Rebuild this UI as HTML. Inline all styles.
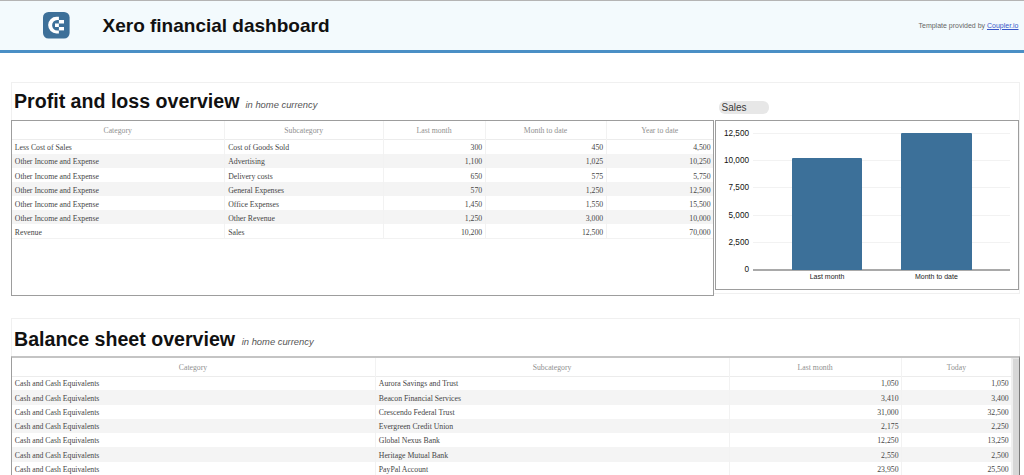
<!DOCTYPE html>
<html><head><meta charset="utf-8">
<style>
*{box-sizing:border-box;margin:0;padding:0}
html,body{width:1024px;height:475px;overflow:hidden;background:#fff;font-family:"Liberation Sans",sans-serif}
.abs{position:absolute}
#hdr{left:0;top:0;width:1024px;height:50px;background:#f3fafd;border-top:1px solid #b4b4b4}
#hbar{left:0;top:50px;width:1024px;height:3px;background:#4a8fc5}
#title{left:102.5px;top:13.8px;font-weight:bold;font-size:19px;color:#111;white-space:nowrap;line-height:24px}
#tpl{right:5.5px;top:19.5px;font-size:7px;color:#666;line-height:12px;white-space:nowrap}
#tpl a{color:#3857c9;text-decoration:underline}
.card{border:1px solid #f0f0f0;background:#fff}
.h2{font-weight:bold;font-size:19.6px;color:#111;white-space:nowrap;line-height:24px}
.sub{font-style:italic;font-size:9.4px;color:#555;white-space:nowrap;line-height:12px}
.tbl{border:1px solid #9d9d9d;background:#fff;overflow:hidden}
.serif{font-family:"Liberation Serif",serif;font-size:7.75px;white-space:nowrap;line-height:10px}
.hd{color:#909090;text-align:center}
.cell{color:#454545}
.r{text-align:right}
.stripe{background:#f4f4f4}
.vl{width:1px;background:#f2f2f2}
.hl{height:1px;background:#ececec}
.ylab{font-size:8.2px;color:#111;text-align:right;width:40px;line-height:10px}
.grid{height:1px;background:#f2f2f2;left:753px;width:257px}
.bar{background:#3c7099;border-radius:1px 1px 0 0}
.xlab{font-size:7px;color:#222;text-align:center;line-height:10px;white-space:nowrap}
</style></head>
<body>
<div id="hdr" class="abs"></div>
<div id="hbar" class="abs"></div>
<svg class="abs" style="left:0;top:0" width="100" height="50" viewBox="0 0 100 50">
  <rect x="43" y="12" width="26.6" height="26.5" rx="5.5" fill="#3d7099"></rect>
  <path d="M58.9 16.8 H56.45 A8.3 8.3 0 0 0 56.45 33.4 H58.9 V30.4 H57.3 A5.2 5.2 0 0 1 57.3 20 H58.9 Z" fill="#fff"></path>
  <rect x="58.9" y="20" width="5.1" height="3.5" fill="#fff"></rect>
  <rect x="58.9" y="27" width="5.1" height="3.4" fill="#fff"></rect>
  <rect x="55" y="23.5" width="3.9" height="3.5" fill="#fff"></rect>
</svg>
<div id="title" class="abs">Xero financial dashboard</div>
<div id="tpl" class="abs">Template provided by <a>Coupler.io</a></div>

<!-- Card 1 -->
<div class="abs card" style="left:11px;top:82px;width:1009px;height:212px"></div>
<div class="abs h2" style="left:14px;top:88.5px">Profit and loss overview</div>
<div class="abs sub" style="left:245.5px;top:98.5px">in home currency</div>

<div class="abs tbl" style="left:11px;top:120px;width:703px;height:175.5px"></div>
<div id="pl"><div class="abs stripe" style="left:12px;top:153.58px;width:701px;height:14.18px"></div><div class="abs stripe" style="left:12px;top:181.94px;width:701px;height:14.18px"></div><div class="abs stripe" style="left:12px;top:210.3px;width:701px;height:14.18px"></div><div class="abs hl" style="left:12px;top:138.9px;width:701px"></div><div class="abs hl" style="left:12px;top:238.2px;width:701px;background:#f2f2f2"></div><div class="abs vl" style="left:224.4px;top:121px;height:117.66px"></div><div class="abs vl" style="left:383px;top:121px;height:117.66px"></div><div class="abs vl" style="left:485px;top:121px;height:117.66px"></div><div class="abs vl" style="left:606px;top:121px;height:117.66px"></div><div class="abs serif hd" style="left:11px;width:213.4px;top:125.6px">Category</div><div class="abs serif hd" style="left:224.4px;width:158.6px;top:125.6px">Subcategory</div><div class="abs serif hd" style="left:383px;width:102px;top:125.6px">Last month</div><div class="abs serif hd" style="left:485px;width:121px;top:125.6px">Month to date</div><div class="abs serif hd" style="left:606px;width:107.39999999999998px;top:125.6px">Year to date</div><div class="abs serif cell" style="left:14.8px;top:143.3px">Less Cost of Sales</div><div class="abs serif cell" style="left:228.20000000000002px;top:143.3px">Cost of Goods Sold</div><div class="abs serif cell r" style="left:383px;width:99.2px;top:143.3px">300</div><div class="abs serif cell r" style="left:485px;width:118.2px;top:143.3px">450</div><div class="abs serif cell r" style="left:606px;width:104.59999999999998px;top:143.3px">4,500</div><div class="abs serif cell" style="left:14.8px;top:157.48000000000002px">Other Income and Expense</div><div class="abs serif cell" style="left:228.20000000000002px;top:157.48000000000002px">Advertising</div><div class="abs serif cell r" style="left:383px;width:99.2px;top:157.48000000000002px">1,100</div><div class="abs serif cell r" style="left:485px;width:118.2px;top:157.48000000000002px">1,025</div><div class="abs serif cell r" style="left:606px;width:104.59999999999998px;top:157.48000000000002px">10,250</div><div class="abs serif cell" style="left:14.8px;top:171.66px">Other Income and Expense</div><div class="abs serif cell" style="left:228.20000000000002px;top:171.66px">Delivery costs</div><div class="abs serif cell r" style="left:383px;width:99.2px;top:171.66px">650</div><div class="abs serif cell r" style="left:485px;width:118.2px;top:171.66px">575</div><div class="abs serif cell r" style="left:606px;width:104.59999999999998px;top:171.66px">5,750</div><div class="abs serif cell" style="left:14.8px;top:185.84px">Other Income and Expense</div><div class="abs serif cell" style="left:228.20000000000002px;top:185.84px">General Expenses</div><div class="abs serif cell r" style="left:383px;width:99.2px;top:185.84px">570</div><div class="abs serif cell r" style="left:485px;width:118.2px;top:185.84px">1,250</div><div class="abs serif cell r" style="left:606px;width:104.59999999999998px;top:185.84px">12,500</div><div class="abs serif cell" style="left:14.8px;top:200.02px">Other Income and Expense</div><div class="abs serif cell" style="left:228.20000000000002px;top:200.02px">Office Expenses</div><div class="abs serif cell r" style="left:383px;width:99.2px;top:200.02px">1,450</div><div class="abs serif cell r" style="left:485px;width:118.2px;top:200.02px">1,550</div><div class="abs serif cell r" style="left:606px;width:104.59999999999998px;top:200.02px">15,500</div><div class="abs serif cell" style="left:14.8px;top:214.20000000000002px">Other Income and Expense</div><div class="abs serif cell" style="left:228.20000000000002px;top:214.20000000000002px">Other Revenue</div><div class="abs serif cell r" style="left:383px;width:99.2px;top:214.20000000000002px">1,250</div><div class="abs serif cell r" style="left:485px;width:118.2px;top:214.20000000000002px">3,000</div><div class="abs serif cell r" style="left:606px;width:104.59999999999998px;top:214.20000000000002px">10,000</div><div class="abs serif cell" style="left:14.8px;top:228.38000000000002px">Revenue</div><div class="abs serif cell" style="left:228.20000000000002px;top:228.38000000000002px">Sales</div><div class="abs serif cell r" style="left:383px;width:99.2px;top:228.38000000000002px">10,200</div><div class="abs serif cell r" style="left:485px;width:118.2px;top:228.38000000000002px">12,500</div><div class="abs serif cell r" style="left:606px;width:104.59999999999998px;top:228.38000000000002px">70,000</div></div>

<!-- Chart -->
<div class="abs" style="left:719px;top:101px;width:49.5px;height:13px;background:#e7e7e7;border-radius:6px"></div>
<div class="abs" style="left:721.5px;top:101px;font-size:10px;color:#3a3a3a;line-height:13px">Sales</div>
<div class="abs" style="left:715px;top:120px;width:304px;height:170px;border:1px solid #9d9d9d;background:#fff"></div>
<div id="chart"><div class="abs grid" style="top:242.05999999999997px"></div><div class="abs grid" style="top:214.71999999999997px"></div><div class="abs grid" style="top:187.38px"></div><div class="abs grid" style="top:160.03999999999996px"></div><div class="abs grid" style="top:132.7px"></div><div class="abs" style="left:753px;top:269.15px;width:257px;height:1.6px;background:#a9a9a9"></div><div class="abs bar" style="left:791.8px;top:158.4px;width:70.4px;height:111.49999999999997px"></div><div class="abs bar" style="left:901px;top:133.2px;width:70.8px;height:136.7px"></div><div class="abs ylab" style="left:709px;top:265.40px;">0</div><div class="abs ylab" style="left:709px;top:238.06px;">2,500</div><div class="abs ylab" style="left:709px;top:210.72px;">5,000</div><div class="abs ylab" style="left:709px;top:183.38px;">7,500</div><div class="abs ylab" style="left:709px;top:156.04px;">10,000</div><div class="abs ylab" style="left:709px;top:128.70px;">12,500</div><div class="abs xlab" style="left:777px;width:100px;top:272px">Last month</div><div class="abs xlab" style="left:886.4px;width:100px;top:272px">Month to date</div></div>

<!-- Card 2 -->
<div class="abs card" style="left:11px;top:318.2px;width:1009px;height:200px"></div>
<div class="abs h2" style="left:14px;top:326.5px">Balance sheet overview</div>
<div class="abs sub" style="left:241.75px;top:336px">in home currency</div>
<div class="abs tbl" style="left:11px;top:356px;width:1009px;height:200px;border-top:2px solid #c4c4c4;border-right:1px solid #7a7a7a"></div>
<div id="bs"><div class="abs stripe" style="left:12px;top:390.45px;width:999.5px;height:14.25px"></div><div class="abs stripe" style="left:12px;top:418.95px;width:999.5px;height:14.25px"></div><div class="abs stripe" style="left:12px;top:447.45px;width:999.5px;height:14.25px"></div><div class="abs stripe" style="left:12px;top:475.95px;width:999.5px;height:14.25px"></div><div class="abs hl" style="left:12px;top:375.7px;width:999.5px"></div><div class="abs vl" style="left:375px;top:357.5px;height:200px"></div><div class="abs vl" style="left:729px;top:357.5px;height:200px"></div><div class="abs vl" style="left:901.3px;top:357.5px;height:200px"></div><div class="abs serif hd" style="left:11px;width:364px;top:362.6px">Category</div><div class="abs serif hd" style="left:375px;width:354px;top:362.6px">Subcategory</div><div class="abs serif hd" style="left:729px;width:172.29999999999995px;top:362.6px">Last month</div><div class="abs serif hd" style="left:901.3px;width:110.20000000000005px;top:362.6px">Today</div><div class="abs serif cell" style="left:14.8px;top:379.3px">Cash and Cash Equivalents</div><div class="abs serif cell" style="left:378.8px;top:379.3px">Aurora Savings and Trust</div><div class="abs serif cell r" style="left:729px;width:169.49999999999994px;top:379.3px">1,050</div><div class="abs serif cell r" style="left:901.3px;width:107.40000000000005px;top:379.3px">1,050</div><div class="abs serif cell" style="left:14.8px;top:393.55px">Cash and Cash Equivalents</div><div class="abs serif cell" style="left:378.8px;top:393.55px">Beacon Financial Services</div><div class="abs serif cell r" style="left:729px;width:169.49999999999994px;top:393.55px">3,410</div><div class="abs serif cell r" style="left:901.3px;width:107.40000000000005px;top:393.55px">3,400</div><div class="abs serif cell" style="left:14.8px;top:407.8px">Cash and Cash Equivalents</div><div class="abs serif cell" style="left:378.8px;top:407.8px">Crescendo Federal Trust</div><div class="abs serif cell r" style="left:729px;width:169.49999999999994px;top:407.8px">31,000</div><div class="abs serif cell r" style="left:901.3px;width:107.40000000000005px;top:407.8px">32,500</div><div class="abs serif cell" style="left:14.8px;top:422.05px">Cash and Cash Equivalents</div><div class="abs serif cell" style="left:378.8px;top:422.05px">Evergreen Credit Union</div><div class="abs serif cell r" style="left:729px;width:169.49999999999994px;top:422.05px">2,175</div><div class="abs serif cell r" style="left:901.3px;width:107.40000000000005px;top:422.05px">2,250</div><div class="abs serif cell" style="left:14.8px;top:436.3px">Cash and Cash Equivalents</div><div class="abs serif cell" style="left:378.8px;top:436.3px">Global Nexus Bank</div><div class="abs serif cell r" style="left:729px;width:169.49999999999994px;top:436.3px">12,250</div><div class="abs serif cell r" style="left:901.3px;width:107.40000000000005px;top:436.3px">13,250</div><div class="abs serif cell" style="left:14.8px;top:450.55px">Cash and Cash Equivalents</div><div class="abs serif cell" style="left:378.8px;top:450.55px">Heritage Mutual Bank</div><div class="abs serif cell r" style="left:729px;width:169.49999999999994px;top:450.55px">2,550</div><div class="abs serif cell r" style="left:901.3px;width:107.40000000000005px;top:450.55px">2,500</div><div class="abs serif cell" style="left:14.8px;top:464.8px">Cash and Cash Equivalents</div><div class="abs serif cell" style="left:378.8px;top:464.8px">PayPal Account</div><div class="abs serif cell r" style="left:729px;width:169.49999999999994px;top:464.8px">23,950</div><div class="abs serif cell r" style="left:901.3px;width:107.40000000000005px;top:464.8px">25,500</div><div class="abs serif cell" style="left:14.8px;top:479.05px">Cash and Cash Equivalents</div><div class="abs serif cell" style="left:378.8px;top:479.05px">Savings Account</div><div class="abs serif cell r" style="left:729px;width:169.49999999999994px;top:479.05px">5,000</div><div class="abs serif cell r" style="left:901.3px;width:107.40000000000005px;top:479.05px">5,000</div><div class="abs" style="left:1011px;top:358px;width:8px;height:120px;background:#d7d7d7;border-left:2px solid #efefef;border-top:1px solid #e6e6e6"></div></div>


</body></html>
